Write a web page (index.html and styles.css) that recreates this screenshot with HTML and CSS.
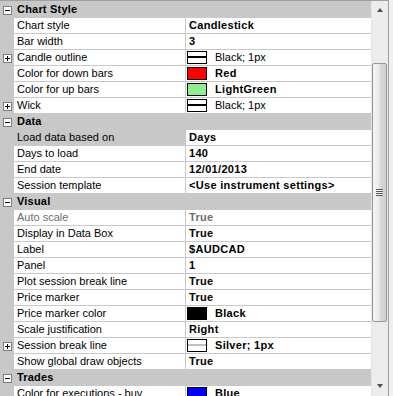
FILE: index.html
```html
<!DOCTYPE html>
<html lang="en">
    <head>
        <meta charset="UTF-8" />
        <title>Chart Properties</title>
        <link rel="stylesheet" href="styles.css">
    </head>
    <body>
        <div class="grid">
            <div class="props">
                <div class="row cat">
                    <div class="margin"><span class="toggle minus"></span></div>
                    <div class="label">Chart Style</div>
                </div>
                <div class="row">
                    <div class="margin"></div>
                    <div class="name">Chart style</div>
                    <div class="value">Candlestick</div>
                </div>
                <div class="row">
                    <div class="margin"></div>
                    <div class="name">Bar width</div>
                    <div class="value">3</div>
                </div>
                <div class="row">
                    <div class="margin"><span class="toggle plus"></span></div>
                    <div class="name">Candle outline</div>
                    <div class="value normal"><span class="swatch line"></span>Black; 1px</div>
                </div>
                <div class="row">
                    <div class="margin"></div>
                    <div class="name">Color for down bars</div>
                    <div class="value"><span class="swatch red"></span>Red</div>
                </div>
                <div class="row">
                    <div class="margin"></div>
                    <div class="name">Color for up bars</div>
                    <div class="value"><span class="swatch lightgreen"></span>LightGreen</div>
                </div>
                <div class="row">
                    <div class="margin"><span class="toggle plus"></span></div>
                    <div class="name">Wick</div>
                    <div class="value normal"><span class="swatch line"></span>Black; 1px</div>
                </div>

                <div class="row cat">
                    <div class="margin"><span class="toggle minus"></span></div>
                    <div class="label">Data</div>
                </div>
                <div class="row">
                    <div class="margin"></div>
                    <div class="name selected">Load data based on</div>
                    <div class="value">Days</div>
                </div>
                <div class="row">
                    <div class="margin"></div>
                    <div class="name">Days to load</div>
                    <div class="value">140</div>
                </div>
                <div class="row">
                    <div class="margin"></div>
                    <div class="name">End date</div>
                    <div class="value">12/01/2013</div>
                </div>
                <div class="row">
                    <div class="margin"></div>
                    <div class="name">Session template</div>
                    <div class="value">&lt;Use instrument settings&gt;</div>
                </div>

                <div class="row cat">
                    <div class="margin"><span class="toggle minus"></span></div>
                    <div class="label">Visual</div>
                </div>
                <div class="row disabled">
                    <div class="margin"></div>
                    <div class="name">Auto scale</div>
                    <div class="value">True</div>
                </div>
                <div class="row">
                    <div class="margin"></div>
                    <div class="name">Display in Data Box</div>
                    <div class="value">True</div>
                </div>
                <div class="row">
                    <div class="margin"></div>
                    <div class="name">Label</div>
                    <div class="value">$AUDCAD</div>
                </div>
                <div class="row">
                    <div class="margin"></div>
                    <div class="name">Panel</div>
                    <div class="value">1</div>
                </div>
                <div class="row">
                    <div class="margin"></div>
                    <div class="name">Plot session break line</div>
                    <div class="value">True</div>
                </div>
                <div class="row">
                    <div class="margin"></div>
                    <div class="name">Price marker</div>
                    <div class="value">True</div>
                </div>
                <div class="row">
                    <div class="margin"></div>
                    <div class="name">Price marker color</div>
                    <div class="value"><span class="swatch black"></span>Black</div>
                </div>
                <div class="row">
                    <div class="margin"></div>
                    <div class="name">Scale justification</div>
                    <div class="value">Right</div>
                </div>
                <div class="row">
                    <div class="margin"><span class="toggle plus"></span></div>
                    <div class="name">Session break line</div>
                    <div class="value"><span class="swatch line silver"></span>Silver; 1px</div>
                </div>
                <div class="row">
                    <div class="margin"></div>
                    <div class="name">Show global draw objects</div>
                    <div class="value">True</div>
                </div>

                <div class="row cat">
                    <div class="margin"><span class="toggle minus"></span></div>
                    <div class="label">Trades</div>
                </div>
                <div class="row">
                    <div class="margin"></div>
                    <div class="name">Color for executions - buy</div>
                    <div class="value"><span class="swatch blue"></span>Blue</div>
                </div>
            </div>

            <div class="scrollbar">
                <div class="arrow up"></div>
                <div class="thumb"><span class="grip"></span></div>
                <div class="arrow down"></div>
            </div>
        </div>
    </body>
</html>
```

FILE: styles.css
```css
body {
    margin: 0;
    background: #f0f0f0;
    font-family: 'Liberation Sans', Arial, sans-serif;
    font-size: 11px;
    color: #000;
}

.grid {
    width: 389px;
    height: 396px;
    box-sizing: border-box;
    display: flex;
    border-top: 1px solid #a0a0a0;
    border-right: 1px solid #a0a0a0;
    overflow: hidden;
}

/* rows */
.props {
    width: 371px;
    display: flex;
    flex-direction: column;
    gap: 1px;
    padding-top: 1px;
    background: #c8c8c8;
}
.row {
    display: flex;
    height: 15px;
    flex-shrink: 0;
    line-height: 15px;
    white-space: nowrap;
}
.margin {
    width: 14px;
    flex-shrink: 0;
}
.name {
    width: 168px;
    padding-left: 3px;
    margin-right: 1px;
    background: #fff;
    overflow: hidden;
}
.name.selected {
    background: #c8c8c8;
}
.value {
    flex: 1;
    display: flex;
    align-items: center;
    padding-left: 3px;
    background: #fff;
    font-weight: bold;
    letter-spacing: 0.3px;
    overflow: hidden;
}
.value.normal {
    font-weight: normal;
    letter-spacing: 0;
}
.disabled .name,
.disabled .value {
    color: #6d6d6d;
}
.cat .label {
    padding-left: 3px;
    font-weight: bold;
    letter-spacing: 0.2px;
}

/* expand / collapse boxes */
.toggle {
    display: block;
    position: relative;
    width: 7px;
    height: 7px;
    margin: 4px 0 0 3px;
    border: 1px solid #808080;
    background: #fff;
}
.toggle::before,
.toggle::after {
    content: '';
    position: absolute;
    background: #000;
}
.toggle::before {
    left: 1px;
    top: 3px;
    width: 5px;
    height: 1px;
}
.plus::after {
    left: 3px;
    top: 1px;
    width: 1px;
    height: 5px;
}

/* value swatches */
.swatch {
    width: 18px;
    height: 11px;
    margin: 0 8px 0 -2px;
    border: 1px solid #000;
    flex-shrink: 0;
}
.swatch.line {
    background: linear-gradient(#fff 4px, #000 4px, #000 6px, #fff 6px);
}
.swatch.silver {
    background: linear-gradient(#fff 4px, #c0c0c0 4px, #c0c0c0 6px, #fff 6px);
}
.red { background: #ff0000; }
.lightgreen { background: #90ee90; }
.black { background: #000; }
.blue { background: #0000ff; }

/* scrollbar */
.scrollbar {
    width: 17px;
    display: flex;
    flex-direction: column;
    background: #ececec;
    border-left: 1px solid #e6e6e6;
    box-sizing: border-box;
}
.arrow {
    height: 17px;
    flex-shrink: 0;
    display: flex;
    align-items: center;
    justify-content: center;
}
.arrow::before {
    content: '';
    border-left: 3.5px solid transparent;
    border-right: 3.5px solid transparent;
}
.arrow.up::before {
    border-bottom: 4px solid #505050;
}
.arrow.down {
    margin-top: auto;
    margin-bottom: 2px;
}
.arrow.down::before {
    border-top: 4px solid #505050;
}
.thumb {
    margin-top: 45px;
    height: 257px;
    flex-shrink: 0;
    border: 1px solid #979797;
    border-radius: 2px;
    margin-right: 1px;
    background: linear-gradient(to right, #f4f4f4, #ebebeb 45%, #d9d9d9 55%, #d0d0d0);
    display: flex;
    align-items: center;
    justify-content: center;
}
.grip {
    width: 7px;
    height: 7px;
    background: repeating-linear-gradient(#5a5a5a 0 1px, #f0f0f0 1px 2px);
}
```
